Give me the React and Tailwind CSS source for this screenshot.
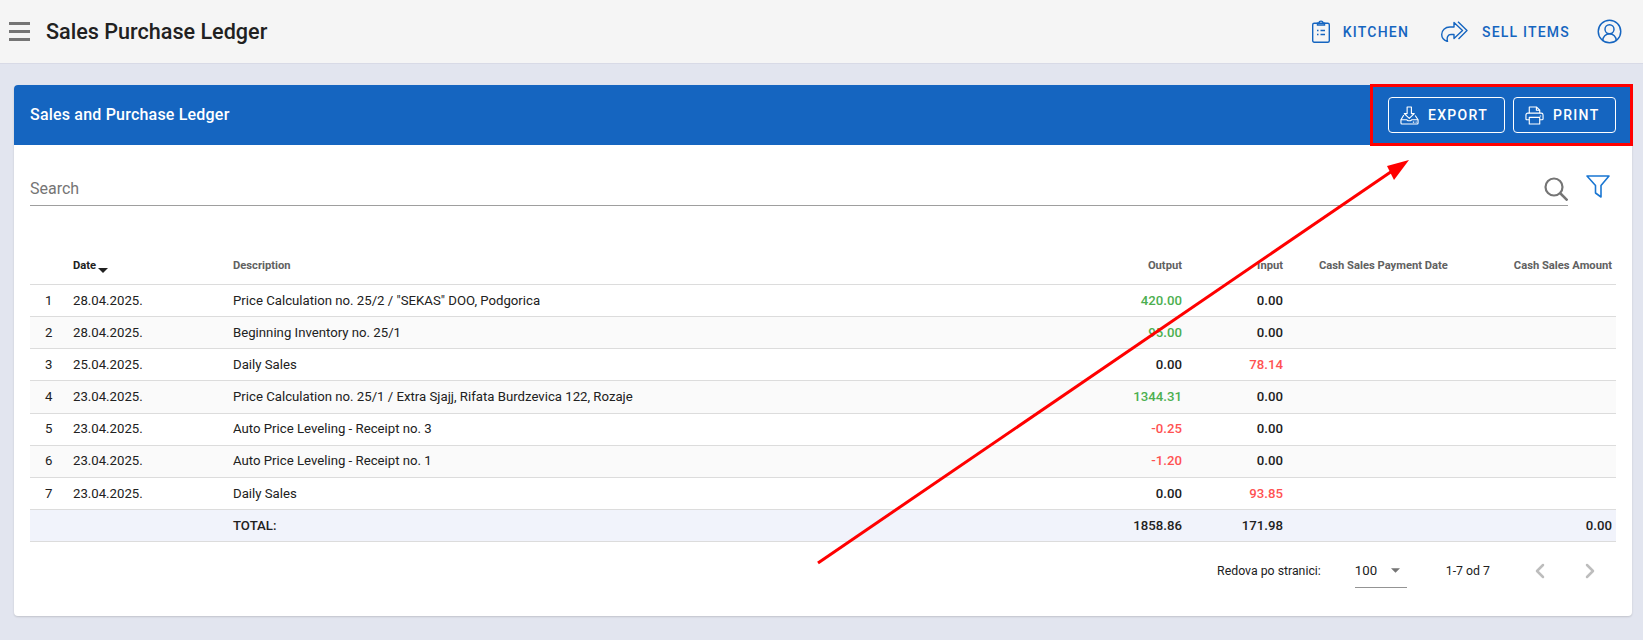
import { ChevronLeft, ChevronRight, CircleUserRound } from "lucide-react";

const ROWS = [
  { n: 1, date: "28.04.2025.", desc: 'Price Calculation no. 25/2 / "SEKAS" DOO, Podgorica', out: "420.00", outC: "text-[#4caf50]", inp: "0.00", inpC: "text-[#212121]" },
  { n: 2, date: "28.04.2025.", desc: "Beginning Inventory no. 25/1", out: "95.00", outC: "text-[#4caf50]", inp: "0.00", inpC: "text-[#212121]" },
  { n: 3, date: "25.04.2025.", desc: "Daily Sales", out: "0.00", outC: "text-[#212121]", inp: "78.14", inpC: "text-[#ff5252]" },
  { n: 4, date: "23.04.2025.", desc: "Price Calculation no. 25/1 / Extra Sjajj, Rifata Burdzevica 122, Rozaje", out: "1344.31", outC: "text-[#4caf50]", inp: "0.00", inpC: "text-[#212121]" },
  { n: 5, date: "23.04.2025.", desc: "Auto Price Leveling - Receipt no. 3", out: "-0.25", outC: "text-[#ff5252]", inp: "0.00", inpC: "text-[#212121]" },
  { n: 6, date: "23.04.2025.", desc: "Auto Price Leveling - Receipt no. 1", out: "-1.20", outC: "text-[#ff5252]", inp: "0.00", inpC: "text-[#212121]" },
  { n: 7, date: "23.04.2025.", desc: "Daily Sales", out: "0.00", outC: "text-[#212121]", inp: "93.85", inpC: "text-[#ff5252]" },
];

function ClipboardIcon() {
  return (
    <svg viewBox="0 0 18 23" fill="none" stroke="#1565c0" strokeWidth="1.4" className="w-[18px] h-[23px]">
      <rect x="0.7" y="3.2" width="16.6" height="19.1" rx="1.5" />
      <path d="M5.500 5V3.200H7C7 .4 11 .4 11 3.200H12.500V5Z" />
      <path d="M5 10.500h1.500M8.500 10.500h4.500M5 14.500h1.500M8.500 14.500h4.500" />
    </svg>
  );
}

function ShareIcon() {
  return (
    <svg viewBox="0 0 27 21" fill="none" stroke="#1565c0" strokeWidth="1.4" strokeLinejoin="round" className="w-[27px] h-[21px]">
      <path d="M13 1.500L21.500 9.500L13 17.500V13.500H10C7 13.500 5.500 16 6.500 20.500C2 19 .7 15.500 .7 13.500C.7 9.500 4 6 9 6H13Z" />
      <path d="M17 .8L26 9.500L17.500 18" />
    </svg>
  );
}

function ExportIcon() {
  return (
    <svg viewBox="0 0 20 20" fill="none" stroke="white" strokeWidth="1.2" strokeLinejoin="round" className="w-[19px] h-[19px]">
      <path d="M7.500 1H12V8H15L9.750 13L4.500 8H7.500Z" />
      <path d="M4 9.500L1 14.500V18C1 18.600 1.400 19 2 19H18C18.600 19 19 18.600 19 18V14.500L16 10" />
      <path d="M1 14.500H7L8.500 15.500H11L12.500 14.500H19" />
      <path d="M13.500 17H15M16.500 17H17.500" />
    </svg>
  );
}

function PrintIcon() {
  return (
    <svg viewBox="0 0 20 20" fill="none" stroke="white" strokeWidth="1.2" strokeLinejoin="round" className="w-[19px] h-[19px]">
      <path d="M4.500 7.500V1H12L15.500 4.500V7.500" />
      <path d="M12 1V4.500H15.500" />
      <path d="M4.500 14.500H2C1.300 14.500 1 14.200 1 13.500V9.500C1 8.300 1.800 7.500 3 7.500H17C18.200 7.500 19 8.300 19 9.500V13.500C19 14.200 18.700 14.500 18 14.500H15.500" />
      <path d="M15.500 10.500H17" />
      <rect x="4.500" y="12" width="11" height="7" />
    </svg>
  );
}

function SearchIcon() {
  return (
    <svg viewBox="0 0 24 24" fill="none" stroke="#757575" strokeWidth="2.2" className="w-[24px] h-[24px]">
      <circle cx="10" cy="10" r="8.500" />
      <path d="M16 16L23.500 23.500" strokeWidth="2.500" />
    </svg>
  );
}

function FilterIcon() {
  return (
    <svg viewBox="0 0 24 23" fill="none" stroke="#1976d2" strokeWidth="1.600" strokeLinejoin="round" className="w-[24px] h-[23px]">
      <path d="M1 1H23L15 10.500V22L9.500 18V10.500Z" />
    </svg>
  );
}

export default function App() {
  return (
    <div className="relative w-full h-[640px] overflow-hidden flex flex-col bg-[#e2e5ef] font-['Roboto',sans-serif] text-[#212121]">
      {/* Top bar */}
      <header className="h-[64px] flex-shrink-0 flex items-center justify-between bg-[#f5f5f5] border-b border-[#d8dae6] pl-[9px] pr-[20px]">
        <div className="flex items-center">
          <div className="w-[21px] flex flex-col gap-[5px]">
            <div className="h-[3px] bg-[#757575]" />
            <div className="h-[3px] bg-[#757575]" />
            <div className="h-[3px] bg-[#757575]" />
          </div>
          <h1 className="ml-[16px] text-[21.6px] font-medium leading-none">Sales Purchase Ledger</h1>
        </div>
        <div className="flex items-center">
          <ClipboardIcon />
          <span className="ml-[13px] text-sm font-medium tracking-[1.2px] text-[#1565c0]">KITCHEN</span>
          <div className="ml-[32px]"><ShareIcon /></div>
          <span className="ml-[14px] text-sm font-medium tracking-[1.2px] text-[#1565c0]">SELL ITEMS</span>
          <CircleUserRound className="ml-[26px] w-[27px] h-[27px] text-[#1565c0]" strokeWidth={1.3} />
        </div>
      </header>

      {/* Card */}
      <main className="mt-[21px] ml-[14px] w-[1618px] h-[531px] flex flex-col rounded bg-white shadow-[0_1px_2px_rgba(0,0,0,0.15)] overflow-hidden">
        <div className="h-[60px] flex-shrink-0 flex items-center justify-between bg-[#1565c0] pl-[16px] pr-[16px]">
          <h2 className="text-base font-medium tracking-[0.2px] text-white">Sales and Purchase Ledger</h2>
          <div className="flex items-center gap-[8px]">
            <button className="w-[117px] h-[36px] flex items-center gap-[9px] pl-[11px] rounded border border-white text-sm font-medium tracking-[1.3px] text-white">
              <ExportIcon />
              EXPORT
            </button>
            <button className="w-[103px] h-[36px] flex items-center gap-[9px] pl-[11px] rounded border border-white text-sm font-medium tracking-[1.3px] text-white">
              <PrintIcon />
              PRINT
            </button>
          </div>
        </div>

        {/* Search */}
        <div className="mt-[28px] pl-[16px] pr-[22px] flex items-start">
          <div className="flex-1 h-[33px] flex items-center justify-between border-b border-[#9e9e9e]">
            <span className="text-base text-[#757575]">Search</span>
            <SearchIcon />
          </div>
          <div className="ml-[18px] mt-[2px]"><FilterIcon /></div>
        </div>

        {/* Table */}
        <div className="mt-[43px] mx-[16px]">
          <div className="h-[36px] flex items-center border-b border-[#dcdcdc] text-[11.2px] font-bold text-[#616161]">
            <div className="w-[43px]" />
            <div className="w-[160px] flex items-center text-[#212121]">
              Date
              <svg viewBox="0 0 10 5" className="ml-[2px] mt-[9px] w-[10px] h-[5px]"><path d="M0 0H10L5 5Z" fill="#212121" /></svg>
            </div>
            <div className="flex-1">Description</div>
            <div className="w-[120px] text-right">Output</div>
            <div className="w-[101px] text-right">Input</div>
            <div className="w-[164px] pl-[36px] whitespace-nowrap">Cash Sales Payment Date</div>
            <div className="w-[169px] text-right pr-[4px] whitespace-nowrap">Cash Sales Amount</div>
          </div>
          {ROWS.map((row) => (
            <div key={row.n} className="h-[32.15px] flex items-center border-b border-[#dcdcdc] text-[13.2px] odd:bg-[#fafafa]">
              <div className="w-[43px] pl-[15px]">{row.n}</div>
              <div className="w-[160px]">{row.date}</div>
              <div className="flex-1 truncate">{row.desc}</div>
              <div className={`w-[120px] text-right font-medium ${row.outC}`}>{row.out}</div>
              <div className={`w-[101px] text-right font-medium ${row.inpC}`}>{row.inp}</div>
              <div className="w-[164px]" />
              <div className="w-[169px]" />
            </div>
          ))}
          <div className="h-[32.15px] flex items-center border-b border-[#dcdcdc] text-[13.2px] font-medium bg-[#f1f3fb]">
            <div className="w-[203px]" />
            <div className="flex-1">TOTAL:</div>
            <div className="w-[120px] text-right">1858.86</div>
            <div className="w-[101px] text-right">171.98</div>
            <div className="w-[164px]" />
            <div className="w-[169px] text-right pr-[4px]">0.00</div>
          </div>
        </div>

        {/* Pagination */}
        <div className="h-[58px] flex items-center justify-end pr-[30px] text-[12.3px]">
          <span>Redova po stranici:</span>
          <div className="ml-[34px] w-[52px] h-[33px] flex items-center justify-between border-b border-[#949494] text-[13.2px] pr-[7px]">
            <span>100</span>
            <svg viewBox="0 0 10 5" className="w-[9px] h-[5px]"><path d="M0 0H10L5 5Z" fill="#757575" /></svg>
          </div>
          <span className="ml-[39px]">1-7 od 7</span>
          <ChevronLeft className="ml-[38px] w-[24px] h-[24px] text-[#bdbdbd]" strokeWidth={2.5} />
          <ChevronRight className="ml-[26px] w-[24px] h-[24px] text-[#bdbdbd]" strokeWidth={2.5} />
        </div>
      </main>

      {/* Annotation overlay */}
      <div className="absolute left-[1370px] top-[84px] w-[263px] h-[62px] border-[3px] border-[#ff0000] pointer-events-none" />
      <svg className="absolute left-0 top-0 pointer-events-none" width="1643" height="640">
        <line x1="818" y1="563" x2="1398" y2="167" stroke="#ff0000" strokeWidth="3" />
        <polygon points="1409,160 1387,166 1394,180" fill="#ff0000" />
      </svg>
    </div>
  );
}
